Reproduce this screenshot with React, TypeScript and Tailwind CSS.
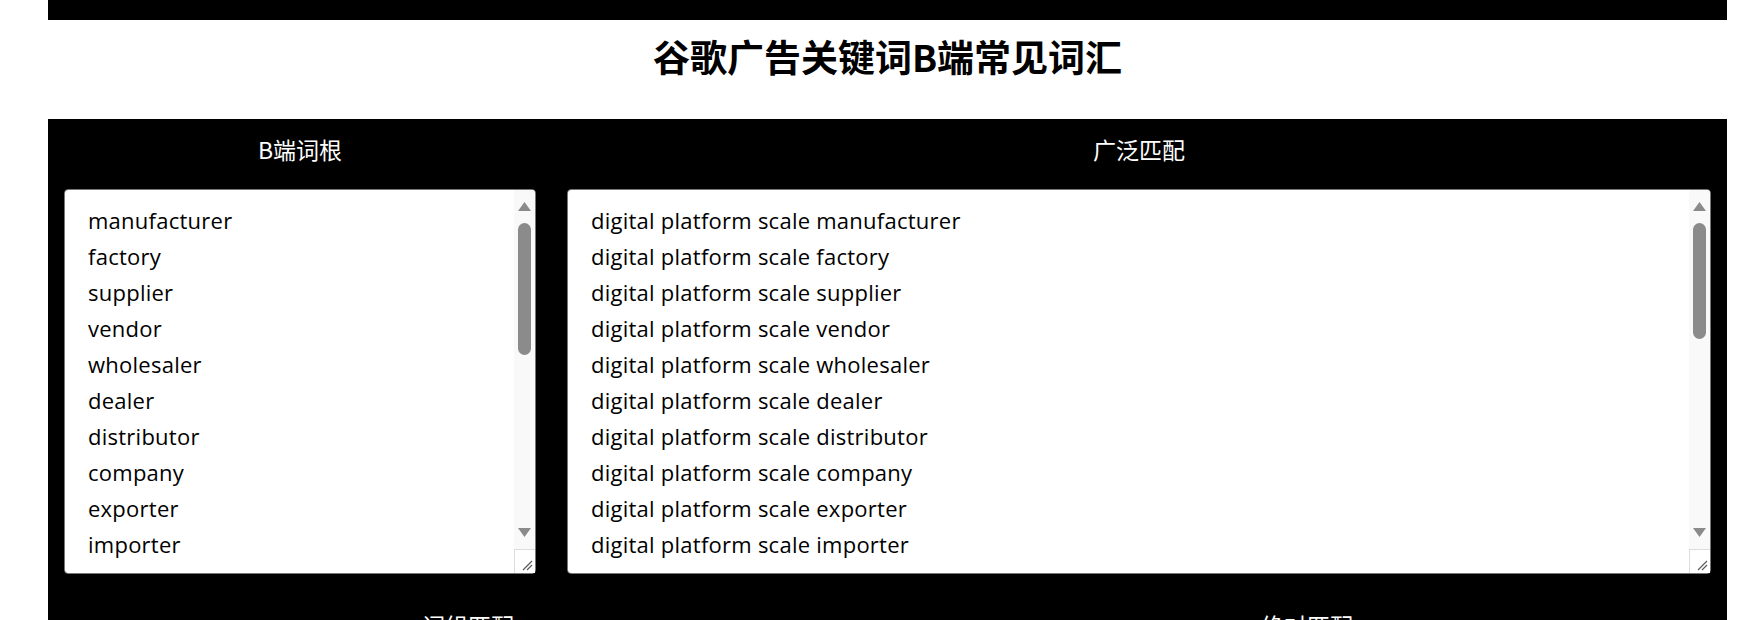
import React from 'react';

const roots = [
  'manufacturer',
  'factory',
  'supplier',
  'vendor',
  'wholesaler',
  'dealer',
  'distributor',
  'company',
  'exporter',
  'importer',
  'wholesale',
  'producer',
  'maker',
  'provider',
  'source',
  'OEM',
  'ODM',
  'china',
  'bulk',
  'price',
  'quote',
  'custom',
  'customized',
  'brand',
  'industrial',
  'plant',
];

const seed = 'digital platform scale';

const broad = roots.map((r) => `${seed} ${r}`).join('\n');
const phrase = roots.map((r) => `"${seed} ${r}"`).join('\n');
const exact = roots.map((r) => `[${seed} ${r}]`).join('\n');

const areaCls =
  "block w-full h-[385px] resize-none overflow-y-scroll [scrollbar-width:none] rounded-[4px] border border-[#767676] bg-white pl-[23px] pr-[30px] pt-[12px] pb-0 text-[22px] leading-[36px] tracking-[0.25px] text-black outline-none font-['Open_Sans','Noto_Sans_CJK_SC',sans-serif]";

const Heading: React.FC<{ children: React.ReactNode }> = ({ children }) => (
  <div className="pt-[11px] pb-[21px] text-center text-[23px] leading-[38px] text-white">
    {children}
  </div>
);

// classic scrollbar + resize grip painted over the textarea's right edge
const ScrollBar: React.FC<{ thumb: string }> = ({ thumb }) => (
  <div className="pointer-events-none absolute top-[1px] right-[1px] bottom-[1px] flex w-[21px] flex-col items-center rounded-r-[3px] bg-[#f9f9f9]">
    <svg className="mt-[12px]" width="13" height="9" viewBox="0 0 13 9">
      <path d="M6.5 0 L13 9 L0 9 Z" fill="#8b8b8b" />
    </svg>
    <div className={`mt-[12px] w-[13px] rounded-full bg-[#8b8b8b] ${thumb}`} />
    <div className="flex-1" />
    <svg className="mb-[12px]" width="13" height="9" viewBox="0 0 13 9">
      <path d="M0 0 L13 0 L6.5 9 Z" fill="#8b8b8b" />
    </svg>
    <div className="h-[24px] w-full border-t border-l border-[#dcdcdc] bg-white">
      <svg width="20" height="23" viewBox="0 0 20 23">
        <path d="M8 20 L17 11 M12 20 L17 15" stroke="#5a5a5a" strokeWidth="1.2" />
      </svg>
    </div>
  </div>
);

const Box: React.FC<{ value: string; thumb: string }> = ({ value, thumb }) => (
  <div className="relative">
    <textarea className={areaCls} defaultValue={value} spellCheck={false} />
    <ScrollBar thumb={thumb} />
  </div>
);

const App: React.FC = () => {
  return (
    <div className="min-h-[620px] bg-white font-['Noto_Sans_CJK_SC','Noto_Sans',sans-serif]">
      <div className="ml-[48px] w-[1679px]">
        <div className="h-[20px] bg-black" />

        <h1 className="mt-[14px] mb-[41px] text-center text-[37px] font-bold leading-[44px] text-black">
          谷歌广告关键词B端常见词汇
        </h1>

        <section className="bg-black px-[16px] pb-[40px]">
          <div className="flex gap-[31px]">
            <div className="w-[472px]">
              <Heading>B端词根</Heading>
              <Box value={roots.join('\n')} thumb="h-[132px]" />
            </div>
            <div className="flex-1">
              <Heading>广泛匹配</Heading>
              <Box value={broad} thumb="h-[116px]" />
            </div>
          </div>

          <div className="mt-[21px] grid grid-cols-2 gap-[31px]">
            <div>
              <Heading>词组匹配</Heading>
              <Box value={phrase} thumb="h-[116px]" />
            </div>
            <div>
              <Heading>绝对匹配</Heading>
              <Box value={exact} thumb="h-[116px]" />
            </div>
          </div>
        </section>
      </div>
    </div>
  );
};

export default App;
